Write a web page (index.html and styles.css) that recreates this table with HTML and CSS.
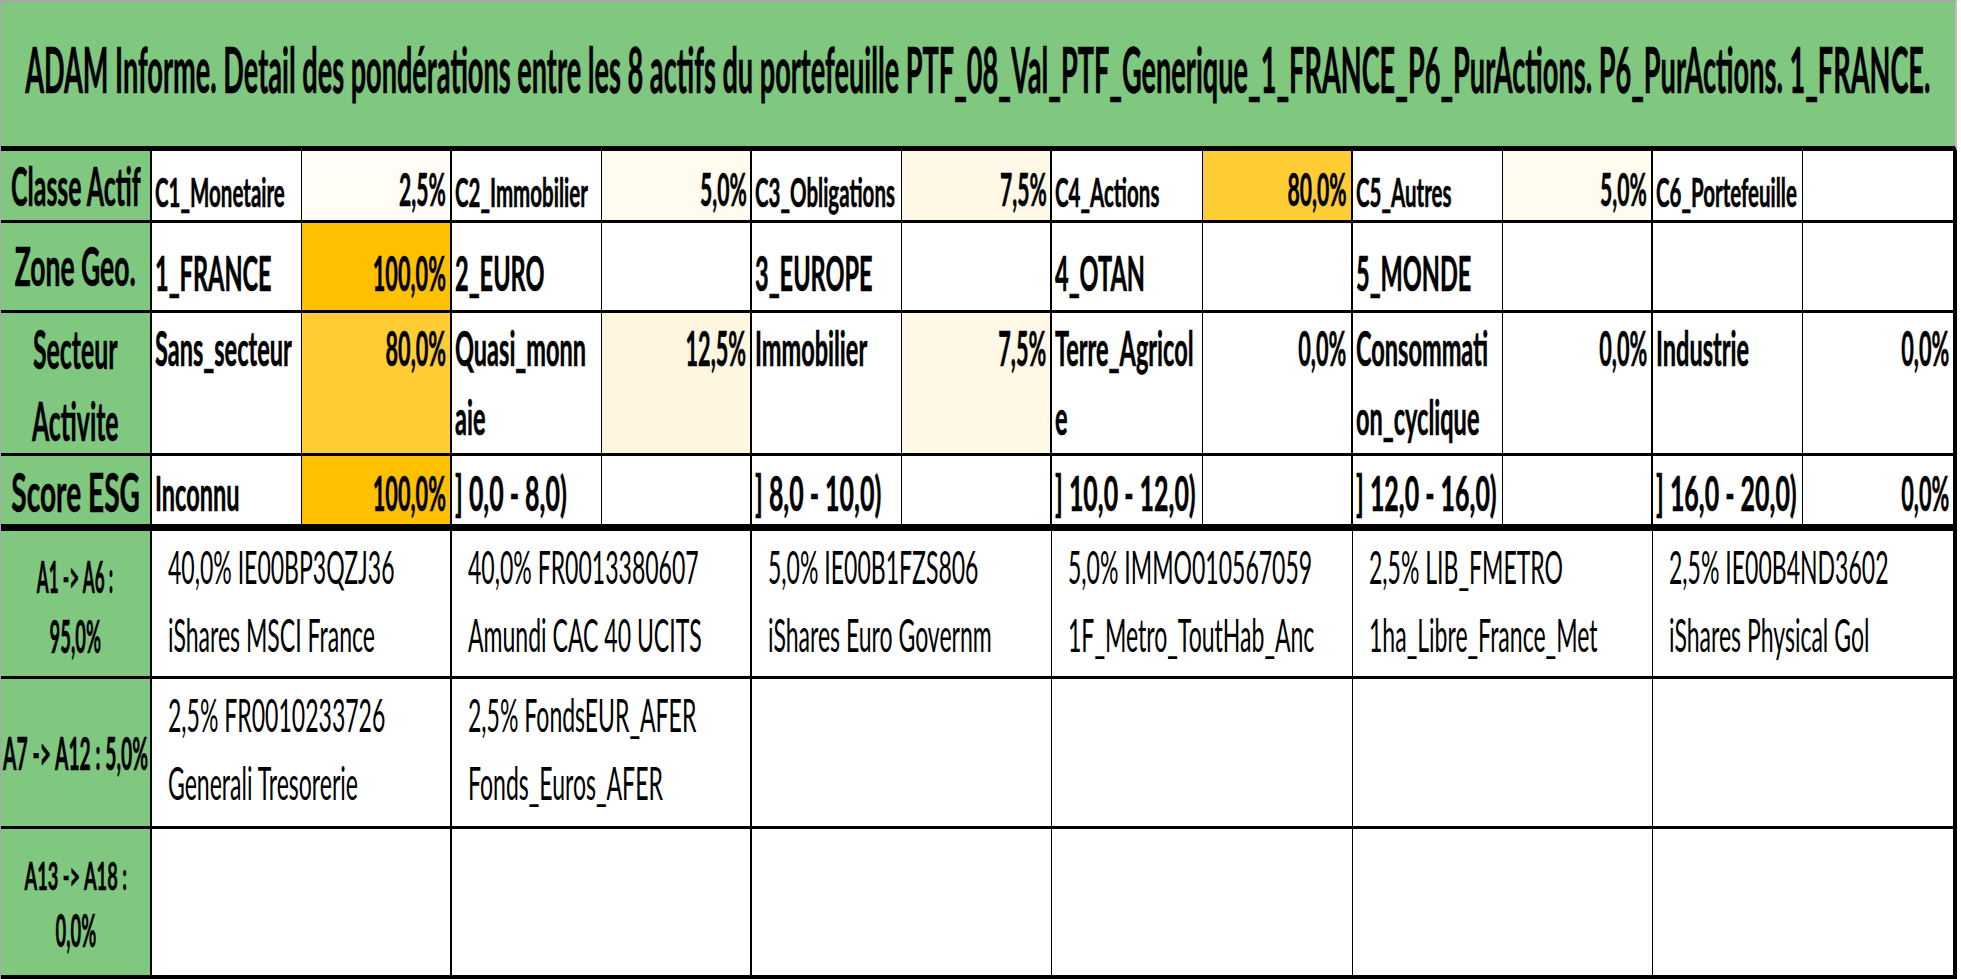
FILE: index.html
```html
<!DOCTYPE html>
<html lang="fr">
<head>
<meta charset="utf-8">
<title>ADAM Informe</title>
<link rel="stylesheet" href="styles.css">
</head>
<body>
<div class="sheet">
  <header class="title"><span class="t">ADAM Informe. Detail des pondérations entre les 8 actifs du portefeuille PTF_08_Val_PTF_Generique_1_FRANCE_P6_PurActions. P6_PurActions. 1_FRANCE.</span></header>

  <div class="row r1">
    <div class="c lab"><span class="t">Classe Actif</span></div>
    <div class="c nm"><span class="t">C1_Monetaire</span></div>
    <div class="c val g25"><span class="t">2,5%</span></div>
    <div class="c nm"><span class="t">C2_Immobilier</span></div>
    <div class="c val g5"><span class="t">5,0%</span></div>
    <div class="c nm"><span class="t">C3_Obligations</span></div>
    <div class="c val g75"><span class="t">7,5%</span></div>
    <div class="c nm"><span class="t">C4_Actions</span></div>
    <div class="c val g80"><span class="t">80,0%</span></div>
    <div class="c nm"><span class="t">C5_Autres</span></div>
    <div class="c val g5"><span class="t">5,0%</span></div>
    <div class="c nm"><span class="t">C6_Portefeuille</span></div>
    <div class="c val"></div>
  </div>

  <div class="row r2">
    <div class="c lab"><span class="t">Zone Geo.</span></div>
    <div class="c nm"><span class="t">1_FRANCE</span></div>
    <div class="c val g100"><span class="t">100,0%</span></div>
    <div class="c nm"><span class="t">2_EURO</span></div>
    <div class="c val"></div>
    <div class="c nm"><span class="t">3_EUROPE</span></div>
    <div class="c val"></div>
    <div class="c nm"><span class="t">4_OTAN</span></div>
    <div class="c val"></div>
    <div class="c nm"><span class="t">5_MONDE</span></div>
    <div class="c val"></div>
    <div class="c nm"></div>
    <div class="c val"></div>
  </div>

  <div class="row r3">
    <div class="c lab"><span class="t">Secteur<br>Activite</span></div>
    <div class="c nm"><span class="t">Sans_secteur</span></div>
    <div class="c val g80"><span class="t">80,0%</span></div>
    <div class="c nm"><span class="t">Quasi_monn<br>aie</span></div>
    <div class="c val g125"><span class="t">12,5%</span></div>
    <div class="c nm"><span class="t">Immobilier</span></div>
    <div class="c val g75"><span class="t">7,5%</span></div>
    <div class="c nm"><span class="t">Terre_Agricol<br>e</span></div>
    <div class="c val"><span class="t">0,0%</span></div>
    <div class="c nm"><span class="t">Consommati<br>on_cyclique</span></div>
    <div class="c val"><span class="t">0,0%</span></div>
    <div class="c nm"><span class="t">Industrie</span></div>
    <div class="c val"><span class="t">0,0%</span></div>
  </div>

  <div class="row r4">
    <div class="c lab"><span class="t">Score ESG</span></div>
    <div class="c nm"><span class="t">Inconnu</span></div>
    <div class="c val g100"><span class="t">100,0%</span></div>
    <div class="c nm rg"><span class="t">] 0,0 - 8,0)</span></div>
    <div class="c val"></div>
    <div class="c nm rg"><span class="t">] 8,0 - 10,0)</span></div>
    <div class="c val"></div>
    <div class="c nm rg"><span class="t">] 10,0 - 12,0)</span></div>
    <div class="c val"></div>
    <div class="c nm rg"><span class="t">] 12,0 - 16,0)</span></div>
    <div class="c val"></div>
    <div class="c nm rg"><span class="t">] 16,0 - 20,0)</span></div>
    <div class="c val"><span class="t">0,0%</span></div>
  </div>

  <div class="row ra ra1">
    <div class="c lab"><div class="stack"><span class="t l1">A1 -&gt; A6 :</span><span class="t l2">95,0%</span></div></div>
    <div class="c a thick"><span class="t">40,0% IE00BP3QZJ36<br>iShares MSCI France</span></div>
    <div class="c a thick"><span class="t">40,0% FR0013380607<br>Amundi CAC 40 UCITS</span></div>
    <div class="c a"><span class="t">5,0% IE00B1FZS806<br>iShares Euro Governm</span></div>
    <div class="c a"><span class="t">5,0% IMMO010567059<br>1F_Metro_ToutHab_Anc</span></div>
    <div class="c a"><span class="t">2,5% LIB_FMETRO<br>1ha_Libre_France_Met</span></div>
    <div class="c a"><span class="t">2,5% IE00B4ND3602<br>iShares Physical Gol</span></div>
  </div>

  <div class="row ra ra2">
    <div class="c lab"><span class="t">A7 -&gt; A12 : 5,0%</span></div>
    <div class="c a thick"><span class="t">2,5% FR0010233726<br>Generali Tresorerie</span></div>
    <div class="c a thick"><span class="t">2,5% FondsEUR_AFER<br>Fonds_Euros_AFER</span></div>
    <div class="c a"></div>
    <div class="c a"></div>
    <div class="c a"></div>
    <div class="c a"></div>
  </div>

  <div class="row ra ra3">
    <div class="c lab"><div class="stack"><span class="t l1">A13 -&gt; A18 :</span><span class="t l2">0,0%</span></div></div>
    <div class="c a thick"></div>
    <div class="c a thick"></div>
    <div class="c a"></div>
    <div class="c a"></div>
    <div class="c a"></div>
    <div class="c a"></div>
  </div>
</div>
</body>
</html>
```

FILE: styles.css
```css
* { box-sizing: border-box; }

body {
  margin: 0;
  background: #ffffff;
  color: #000000;
  font-family: Lato, "Open Sans", "Liberation Sans", sans-serif;
}

.sheet {
  width: 1957px;
  border-left: 1px solid #a6a6a6;
}

/* condensed text: glyphs are narrowed horizontally */
.t {
  display: inline-block;
  white-space: nowrap;
  transform: scaleX(var(--sx, 0.452));
  transform-origin: left center;
}

.title {
  height: 151px;
  background: #80c880;
  border-top: 2px solid #a6a6a6;
  border-bottom: 5px solid #000;
  border-right: 2px solid #bdbdbd;
  display: flex;
  justify-content: center;
  align-items: center;
  padding-bottom: 10px;
  font-weight: 700;
  font-size: 64px;
  line-height: 1.2;
  -webkit-text-stroke: 0.6px #000;
  --sx: 0.424;
}
.title .t { transform-origin: center center; }

.row {
  display: grid;
  grid-template-columns: 151px repeat(12, minmax(0, 1fr));
  grid-template-rows: minmax(0, 1fr);
  border-right: 4px solid #000;
  border-bottom: 3px solid #000;
}
.r1 { height: 72px; }
.r2 { height: 90px; }
.r3 { height: 143px; }
.r4 { height: 75px; border-bottom-width: 7px; }

.ra { grid-template-columns: 151px repeat(6, minmax(0, 1fr)); }
.ra1 { height: 148px; }
.ra2 { height: 150px; }
.ra3 { height: 150px; border-bottom-width: 4px; }

.c {
  display: flex;
  min-width: 0;
  min-height: 0;
  overflow: hidden;
  background: #ffffff;
  border-right: 1px solid #000;
  font-weight: 700;
  line-height: 1.2;
  -webkit-text-stroke: 0.6px #000;
}
.row > .c:last-child { border-right: 0; }

/* label column */
.lab {
  overflow: visible;
  background: #80c880;
  border-right-width: 2px;
  justify-content: center;
  align-items: center;
  text-align: center;
  font-size: 54px;
}
.lab .t { transform-origin: center center; }
.stack {
  display: flex;
  flex-direction: column;
  align-items: center;
}

/* name / value cells */
.nm {
  justify-content: flex-start;
  padding-left: 3px;
  font-size: 48px;
  --sx: 0.49;
}
.nm .t { transform-origin: left center; }
.nm.rg { --sx: 0.52; }

.val {
  justify-content: flex-end;
  padding-right: 4px;
  border-right-width: 2px;
  font-size: 48px;
  --sx: 0.452;
}
.val .t { transform-origin: right center; }

.r1 .nm, .r1 .val, .r2 .nm, .r2 .val, .r4 .nm, .r4 .val { align-items: flex-end; }
.r3 .nm, .r3 .val { align-items: flex-start; }

.r1 .lab { font-size: 53px; --sx: 0.47; }
.r1 .nm { font-size: 41px; padding-bottom: 4px; --sx: 0.5; }
.r1 .val { font-size: 46px; padding-bottom: 4px; --sx: 0.46; }

.r2 .lab { --sx: 0.49; }
.r2 .nm, .r2 .val { padding-bottom: 8px; }

.r3 .lab { padding-top: 4px; --sx: 0.46; }
.r3 .lab .t { line-height: 72px; }
.r3 .nm .t, .r3 .val .t { line-height: 69px; margin-top: 0; }

.r4 .lab { padding-top: 5px; --sx: 0.52; }
.r4 .nm, .r4 .val { padding-bottom: 2px; }

/* heat colours */
.g100 { background: #ffc000; }
.g80 { background: #ffcc33; }
.g125 { background: #fff6e0; }
.g75 { background: #fff8e7; }
.g5 { background: #fffbef; }
.g25 { background: #fffdf5; }

/* asset rows */
.a {
  align-items: flex-start;
  padding: 1px 0 0 16px;
  font-weight: 400;
  font-size: 47px;
  line-height: 68px;
  -webkit-text-stroke: 0;
  --sx: 0.49;
}
.a.thick { border-right-width: 2px; }
.a .t { transform-origin: left top; }

.ra1 .lab { padding-top: 5px; }
.ra1 .l1 { font-size: 44px; line-height: 59px; --sx: 0.39; }
.ra1 .l2 { font-size: 46px; line-height: 59px; --sx: 0.4; }
.ra2 .lab { font-size: 45px; --sx: 0.43; }
.ra3 .lab { padding-top: 5px; }
.ra3 .l1 { font-size: 38px; line-height: 50px; --sx: 0.48; }
.ra3 .l2 { font-size: 46px; line-height: 60px; --sx: 0.4; }
```
